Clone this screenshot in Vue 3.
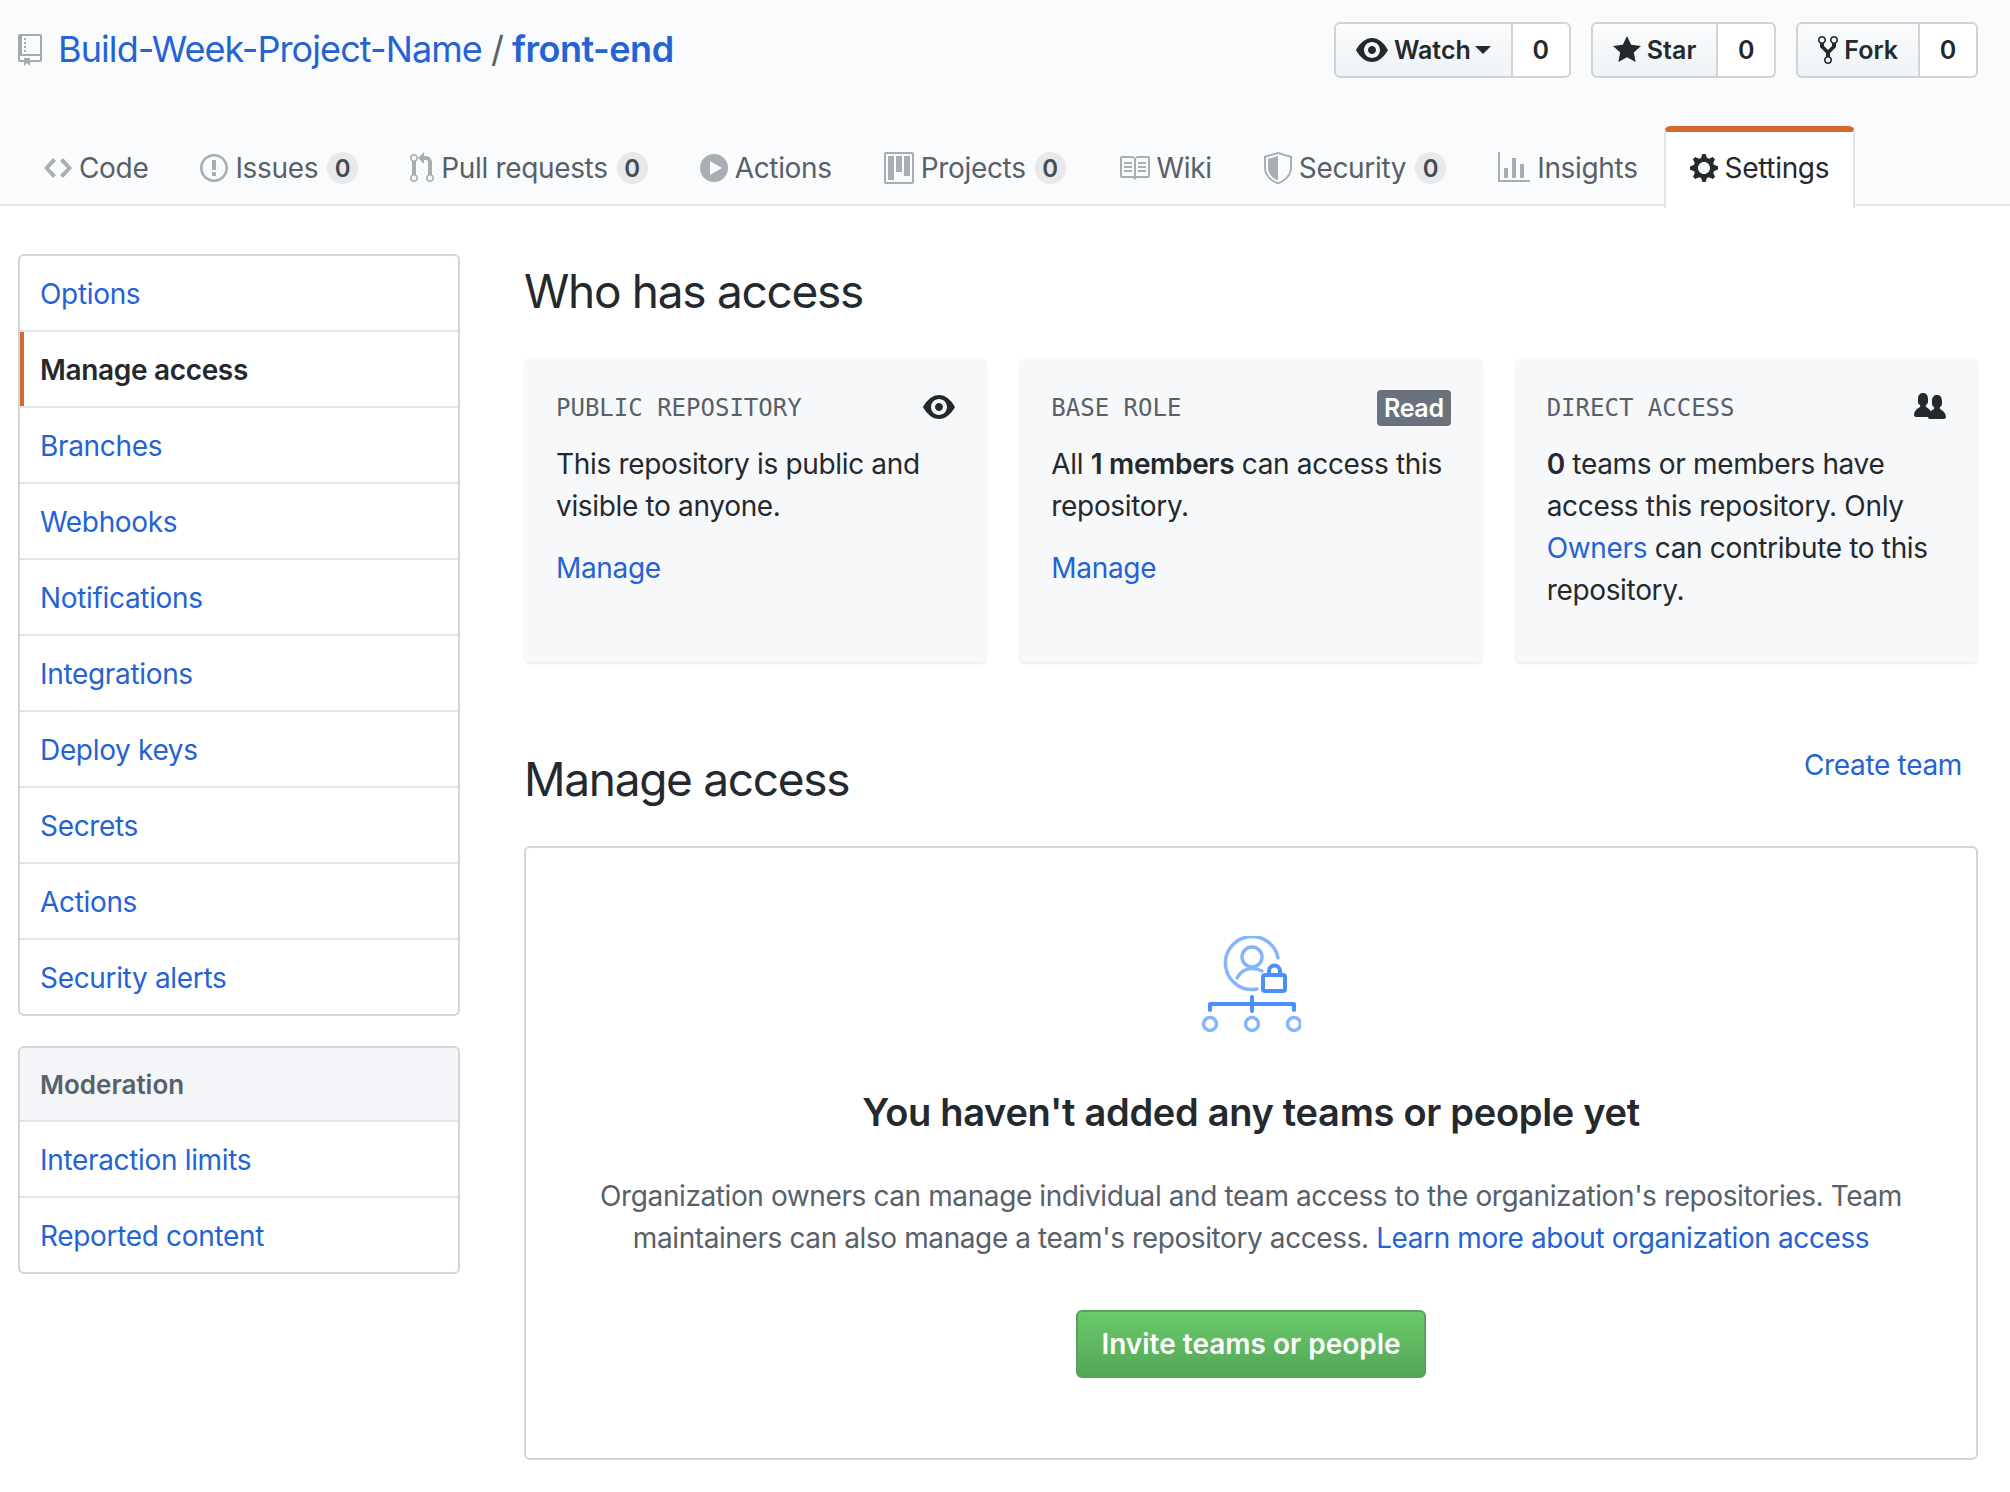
<script setup>
const icons = {
  repo: { w: 12, d: 'M4 9H3V8h1v1zm0-3H3v1h1V6zm0-2H3v1h1V4zm0-2H3v1h1V2zm8-1v12c0 .55-.45 1-1 1H6v2l-1.5-1.5L3 16v-2H1c-.55 0-1-.45-1-1V1c0-.55.45-1 1-1h10c.55 0 1 .45 1 1zm-1 10H1v2h2v-1h3v1h5v-2zm0-10H2v9h9V1z' },
  eye: { w: 16, d: 'M8.06 2C3 2 0 8 0 8s3 6 8.06 6C13 14 16 8 16 8s-3-6-7.94-6zM8 12c-2.2 0-4-1.78-4-4 0-2.2 1.8-4 4-4 2.22 0 4 1.8 4 4 0 2.22-1.78 4-4 4zm2-4c0 1.11-.89 2-2 2-1.11 0-2-.89-2-2 0-1.11.89-2 2-2 1.11 0 2 .89 2 2z' },
  star: { w: 14, d: 'M14 6l-4.9-.64L7 1 4.9 5.36 0 6l3.6 3.26L2.67 14 7 11.67 11.33 14l-.93-4.74L14 6z' },
  fork: { w: 10, d: 'M8 1a1.993 1.993 0 00-1 3.72V6L5 8 3 6V4.72A1.993 1.993 0 002 1a1.993 1.993 0 00-1 3.72V6.5l3 3v1.78A1.993 1.993 0 005 15a1.993 1.993 0 001-3.72V9.5l3-3V4.72A1.993 1.993 0 008 1zM2 4.2C1.34 4.2.8 3.65.8 3c0-.65.55-1.2 1.2-1.2.65 0 1.2.55 1.2 1.2 0 .65-.55 1.2-1.2 1.2zm3 10c-.66 0-1.2-.55-1.2-1.2 0-.65.55-1.2 1.2-1.2.65 0 1.2.55 1.2 1.2 0 .65-.55 1.2-1.2 1.2zm3-10c-.66 0-1.2-.55-1.2-1.2 0-.65.55-1.2 1.2-1.2.65 0 1.2.55 1.2 1.2 0 .65-.55 1.2-1.2 1.2z' },
  code: { w: 14, d: 'M9.5 3L8 4.5 11.5 8 8 11.5 9.5 13 14 8 9.5 3zm-5 0L0 8l4.5 5L6 11.5 2.5 8 6 4.5 4.5 3z' },
  issue: { w: 14, d: 'M7 2.3c3.14 0 5.7 2.56 5.7 5.7s-2.56 5.7-5.7 5.7A5.71 5.71 0 011.3 8c0-3.14 2.56-5.7 5.7-5.7zM7 1C3.14 1 0 4.14 0 8s3.14 7 7 7 7-3.14 7-7-3.14-7-7-7zm1 3H6v5h2V4zm0 6H6v2h2v-2z' },
  pr: { w: 12, d: 'M11 11.28V5c-.03-.78-.34-1.47-.94-2.06C9.46 2.35 8.78 2.03 8 2H7V0L4 3l3 3V4h1c.27.02.48.11.69.31.21.2.3.42.31.69v6.28A1.993 1.993 0 0010 15a1.993 1.993 0 001-3.72zm-1 2.92c-.66 0-1.2-.55-1.2-1.2 0-.65.55-1.2 1.2-1.2.65 0 1.2.55 1.2 1.2 0 .65-.55 1.2-1.2 1.2zM4 3c0-1.11-.89-2-2-2a1.993 1.993 0 00-1 3.72v6.56A1.993 1.993 0 002 15a1.993 1.993 0 001-3.72V4.72c.59-.34 1-.98 1-1.72zm-.8 10c0 .66-.55 1.2-1.2 1.2-.65 0-1.2-.55-1.2-1.2 0-.65.55-1.2 1.2-1.2.65 0 1.2.55 1.2 1.2zM2 4.2C1.34 4.2.8 3.65.8 3c0-.65.55-1.2 1.2-1.2.65 0 1.2.55 1.2 1.2 0 .65-.55 1.2-1.2 1.2z' },
  play: { w: 14, d: 'M7 1a7 7 0 100 14A7 7 0 007 1zM5 4.5L11 8l-6 3.500z' },
  project: { w: 15, d: 'M10 12h3V2h-3v10zm-4-2h3V2H6v8zm-4 4h3V2H2v12zm-1 1h13V1H1v14zM14 0H1a1 1 0 00-1 1v14a1 1 0 001 1h13a1 1 0 001-1V1a1 1 0 00-1-1z' },
  book: { w: 16, d: 'M3 5h4v1H3V5zm0 3h4V7H3v1zm0 2h4V9H3v1zm11-5h-4v1h4V5zm0 2h-4v1h4V7zm0 2h-4v1h4V9zm2-6v9c0 .55-.45 1-1 1H9.5l-1 1-1-1H2c-.55 0-1-.45-1-1V3c0-.55.45-1 1-1h5.5l1 1 1-1H15c.55 0 1 .45 1 1zm-8 .5L7.5 3H2v9h6V3.5zm7-.5H9.5l-.5.5V12h6V3z' },
  shield: { w: 14, d: 'M0 2l7-2 7 2v6.020C14 12.690 8.690 16 7 16c-1.690 0-7-3.310-7-7.980V2zm1 .75L7 1l6 1.750v5.268C13 12.104 8.449 15 7 15c-1.449 0-6-2.896-6-6.982V2.750zm1 .75L7 2v12c-1.207 0-5-2.482-5-5.985V3.500z' },
  graph: { w: 16, d: 'M16 14v1H0V0h1v14h15zM5 13H3V8h2v5zm4 0H7V3h2v10zm4 0h-2V6h2v7z' },
  gear: { w: 14, d: 'M14 8.770v-1.600l-1.940-.64-.45-1.090.88-1.840-1.130-1.130-1.810.91-1.090-.45-.69-1.920h-1.600l-.63 1.940-1.110.45-1.840-.88-1.130 1.130.91 1.810-.45 1.090L0 7.230v1.590l1.940.64.45 1.090-.88 1.840 1.130 1.130 1.810-.91 1.090.45.69 1.920h1.590l.63-1.940 1.110-.45 1.840.88 1.130-1.130-.92-1.810.47-1.090L14 8.750v.02zM7 11c-1.660 0-3-1.340-3-3s1.340-3 3-3 3 1.340 3 3-1.340 3-3 3z' },
  people: { w: 16, d: 'M16 12.999c0 .439-.45 1-1 1H7.995c-.539 0-.994-.447-.995-.999H1c-.54 0-1-.561-1-1 0-2.634 3-4 3-4s.229-.409 0-1c-.841-.621-1.058-.59-1-3 .058-2.419 1.367-3 2.500-3s2.442.58 2.500 3c.058 2.410-.159 2.379-1 3-.229.59 0 1 0 1s1.549.711 2.420 2.088C9.196 9.369 10 8.999 10 8.999s.229-.409 0-1c-.841-.62-1.058-.59-1-3 .058-2.419 1.367-3 2.500-3s2.437.581 2.495 3c.059 2.410-.158 2.380-1 3-.229.59 0 1 0 1s3.005 1.366 3.005 4z' }
}

const actions = [
  { icon: 'eye', label: 'Watch', caret: true, count: 0 },
  { icon: 'star', label: 'Star', count: 0 },
  { icon: 'fork', label: 'Fork', count: 0 }
]

const tabs = [
  { icon: 'code', label: 'Code' },
  { icon: 'issue', label: 'Issues', count: 0 },
  { icon: 'pr', label: 'Pull requests', count: 0 },
  { icon: 'play', label: 'Actions' },
  { icon: 'project', label: 'Projects', count: 0 },
  { icon: 'book', label: 'Wiki' },
  { icon: 'shield', label: 'Security', count: 0 },
  { icon: 'graph', label: 'Insights' },
  { icon: 'gear', label: 'Settings', selected: true }
]

const menu = ['Options', 'Manage access', 'Branches', 'Webhooks', 'Notifications', 'Integrations', 'Deploy keys', 'Secrets', 'Actions', 'Security alerts']
</script>

<template>
  <div class="page">
    <header class="head">
      <div class="title-row">
        <h1 class="title">
          <svg class="repo-icon" :viewBox="`0 0 ${icons.repo.w} 16`" width="24" height="32"><path :d="icons.repo.d" /></svg>
          <a class="link">Build-Week-Project-Name</a>
          <span class="slash">/</span>
          <a class="link strong">front-end</a>
        </h1>
        <div class="actions">
          <div v-for="a in actions" :key="a.label" class="btn-group">
            <div class="btn">
              <svg :viewBox="`0 0 ${icons[a.icon].w} 16`" :width="icons[a.icon].w * 2" height="32"><path :d="icons[a.icon].d" /></svg>
              <span>{{ a.label }}</span>
              <i v-if="a.caret" class="caret"></i>
            </div>
            <div class="social">{{ a.count }}</div>
          </div>
        </div>
      </div>
      <nav class="tabs">
        <a v-for="t in tabs" :key="t.label" class="tab" :class="{ selected: t.selected }">
          <svg :viewBox="`0 0 ${icons[t.icon].w} 16`" :width="icons[t.icon].w * 2" height="32"><path fill-rule="evenodd" :d="icons[t.icon].d" /></svg>
          <span>{{ t.label }}</span>
          <span v-if="t.count !== undefined" class="counter">{{ t.count }}</span>
        </a>
      </nav>
    </header>

    <div class="body">
      <aside class="side">
        <div class="menu">
          <a v-for="m in menu" :key="m" class="item" :class="{ current: m === 'Manage access' }">{{ m }}</a>
        </div>
        <div class="menu">
          <div class="item menu-head">Moderation</div>
          <a class="item">Interaction limits</a>
          <a class="item">Reported content</a>
        </div>
      </aside>

      <main class="main">
        <h2 class="h-who">Who has access</h2>
        <div class="cards">
          <section class="card">
            <div class="card-top">
              <span class="mono">PUBLIC REPOSITORY</span>
              <svg viewBox="0 0 16 16" width="32" height="32"><path :d="icons.eye.d" /></svg>
            </div>
            <p>This repository is public and visible to anyone.</p>
            <a class="link manage">Manage</a>
          </section>
          <section class="card">
            <div class="card-top">
              <span class="mono">BASE ROLE</span>
              <span class="badge">Read</span>
            </div>
            <p>All <b>1 members</b> can access this repository.</p>
            <a class="link manage">Manage</a>
          </section>
          <section class="card">
            <div class="card-top">
              <span class="mono">DIRECT ACCESS</span>
              <svg viewBox="0 0 16 16" width="32" height="32"><path :d="icons.people.d" /></svg>
            </div>
            <p><b>0</b> teams or members have access this repository. Only <a class="link">Owners</a> can contribute to this repository.</p>
          </section>
        </div>

        <div class="manage-head">
          <h2 class="h-manage">Manage access</h2>
          <a class="link create">Create team</a>
        </div>

        <section class="blank">
          <svg class="illus" viewBox="0 0 100 100" width="100" height="100" fill="none" stroke-linecap="round" stroke-linejoin="round">
            <g stroke="#85b6fa" stroke-width="3.500">
              <path d="M56 53 A26.500 26.500 0 1 1 77 22" />
              <circle cx="51" cy="21" r="10" />
              <path d="M36 42 C39 36 45 32.500 51 32.500 C55 32.500 58 33.500 61 35" />
              <circle cx="9" cy="88" r="6.500" />
              <circle cx="51" cy="88" r="6.500" />
              <circle cx="93" cy="88" r="6.500" />
            </g>
            <g stroke="#4b8ffa" stroke-width="4">
              <path d="M9 74 V68 H93 V74 M51 61 V75" />
              <rect x="62" y="39" width="22" height="16" rx="2" />
              <path d="M68 39 V35 A5.500 5.500 0 0 1 79 35 V39" />
            </g>
          </svg>
          <h3>You haven't added any teams or people yet</h3>
          <p>Organization owners can manage individual and team access to the organization's repositories. Team maintainers can also manage a team's repository access. <a class="link">Learn more about organization access</a></p>
          <button class="invite" type="button">Invite teams or people</button>
        </section>
      </main>
    </div>
  </div>
</template>

<style>
html, body { margin: 0; background: #fff; }
</style>

<style scoped>
.page {
  width: 2010px;
  min-height: 1492px;
  font-family: Inter, "Liberation Sans", sans-serif;
  font-size: 28px;
  letter-spacing: -0.33px;
  color: #24292e;
  box-sizing: border-box;
  overflow: hidden;
}
a { text-decoration: none; }
.link { color: #2563d4; }
.head {
  height: 206px;
  box-sizing: border-box;
  background: #fafbfc;
  border-bottom: 2px solid #e1e4e8;
  display: flex;
  flex-direction: column;
  justify-content: space-between;
}
.title-row {
  display: flex;
  justify-content: space-between;
  padding: 22px 32px 0 18px;
}
.title {
  margin: 0;
  display: flex;
  align-items: center;
  height: 54px;
  font-size: 36px;
  font-weight: 400;
  letter-spacing: -0.9px;
  color: #586069;
}
.repo-icon { fill: #a3aab1; margin-right: 16px; margin-top: 2px; }
.slash { margin: 0 9px; }
.strong { font-weight: 600; letter-spacing: -0.5px; }
.actions { display: flex; gap: 20px; }
.btn-group { display: flex; height: 56px; }
.btn {
  display: flex;
  align-items: center;
  gap: 6px;
  padding: 0 20px;
  box-sizing: border-box;
  height: 56px;
  font-size: 25px;
  font-weight: 600;
  letter-spacing: 0;
  border: 2px solid #d1d3d6;
  border-radius: 6px 0 0 6px;
  background: linear-gradient(#fafbfc, #eff3f6);
  white-space: nowrap;
}
.btn svg { fill: #24292e; }
.caret {
  width: 0;
  height: 0;
  margin-left: -2px;
  border: 8px solid transparent;
  border-top-color: #24292e;
  border-bottom-width: 0;
}
.social {
  display: flex;
  align-items: center;
  justify-content: center;
  box-sizing: border-box;
  width: 58px;
  height: 56px;
  font-size: 25px;
  font-weight: 600;
  letter-spacing: 0;
  background: #fff;
  border: 2px solid #d1d3d6;
  border-left: 0;
  border-radius: 0 6px 6px 0;
}
.tabs {
  display: flex;
  padding-left: 18px;
  height: 80px;
  margin-bottom: -2px;
}
.tab {
  display: flex;
  align-items: center;
  gap: 7px;
  box-sizing: border-box;
  height: 82px;
  padding: 2px 26px 0;
  color: #586069;
  white-space: nowrap;
}
.tab svg { fill: #a8aeb4; }
.tab.selected {
  padding: 0 24px 4px;
  color: #24292e;
  background: #fff;
  border: 2px solid #e1e4e8;
  border-top: 6px solid #d66a2d;
  border-bottom: 0;
  border-radius: 6px 6px 0 0;
}
.tab.selected svg { fill: #24292e; }
.counter {
  display: flex;
  align-items: center;
  justify-content: center;
  width: 31px;
  height: 32px;
  margin-left: 2px;
  border-radius: 16px;
  background: rgba(27, 31, 35, 0.08);
  font-size: 24px;
  font-weight: 600;
  letter-spacing: 0;
  color: #444d56;
}
.body {
  display: flex;
  gap: 64px;
  padding: 48px 32px 0 18px;
}
.side {
  width: 442px;
  flex: none;
  display: flex;
  flex-direction: column;
  gap: 30px;
}
.menu {
  border: 2px solid #d1d5da;
  border-radius: 6px;
  overflow: hidden;
}
.item {
  display: flex;
  align-items: center;
  box-sizing: border-box;
  height: 76px;
  padding: 2px 20px 0;
  color: #2563d4;
  border-top: 2px solid #e1e4e8;
}
.item:first-child { border-top: 0; height: 74px; }
.item.current {
  color: #24292e;
  font-weight: 600;
  box-shadow: inset 4px 0 0 #d66a2d;
}
.item.menu-head {
  height: 72px;
  background: #f3f5f8;
  color: #586069;
  font-size: 26px;
  font-weight: 600;
  letter-spacing: 0;
  padding-top: 0;
}
.main { width: 1454px; flex: none; }
h2 {
  margin: 0;
  font-size: 46px;
  font-weight: 400;
  line-height: 60px;
  letter-spacing: -1.3px;
}
.h-who { margin-top: 7px; }
.cards {
  display: grid;
  grid-template-columns: repeat(3, 1fr);
  gap: 32px;
  margin-top: 37px;
}
.card {
  height: 304px;
  box-sizing: border-box;
  padding: 32px;
  background: #f6f8fa;
  border-radius: 6px;
  box-shadow: 0 2px 2px rgba(27, 31, 35, 0.08);
}
.card-top {
  display: flex;
  justify-content: space-between;
  align-items: center;
  height: 36px;
}
.card-top svg { fill: #24292e; margin-top: -3px; }
.mono {
  font-family: "DejaVu Sans Mono", "Liberation Mono", monospace;
  font-size: 24px;
  letter-spacing: 0;
  color: #586069;
}
.badge {
  display: flex;
  align-items: center;
  height: 36px;
  padding: 0 7px;
  background: #6a737d;
  color: #fff;
  font-size: 25px;
  font-weight: 600;
  border-radius: 4px;
}
.card p {
  margin: 17px 0 0;
  line-height: 42px;
}
.card b { font-weight: 600; }
.manage {
  display: block;
  margin-top: 20px;
  line-height: 42px;
}
.manage-head {
  display: flex;
  justify-content: space-between;
  align-items: flex-start;
  margin-top: 87px;
}
.create { margin: -5px 16px 0 0; line-height: 42px; }
.blank {
  margin-top: 37px;
  height: 614px;
  box-sizing: border-box;
  border: 2px solid #d1d5da;
  border-radius: 6px;
  display: flex;
  flex-direction: column;
  align-items: center;
  padding-top: 88px;
}
.illus { flex: none; }
.blank h3 {
  margin: 49px 0 0;
  font-size: 38px;
  font-weight: 600;
  line-height: 54px;
  letter-spacing: -0.3px;
}
.blank p {
  margin: 36px 0 0;
  padding: 0 56px;
  line-height: 42px;
  letter-spacing: -0.4px;
  color: #586069;
  text-align: center;
}
.invite {
  margin-top: 51px;
  width: 350px;
  height: 68px;
  box-sizing: border-box;
  font: 600 28px Inter, "Liberation Sans", sans-serif;
  color: #fff;
  background: linear-gradient(#69cb69, #55a558);
  border: 2px solid #5a9f5c;
  border-radius: 6px;
}
</style>
